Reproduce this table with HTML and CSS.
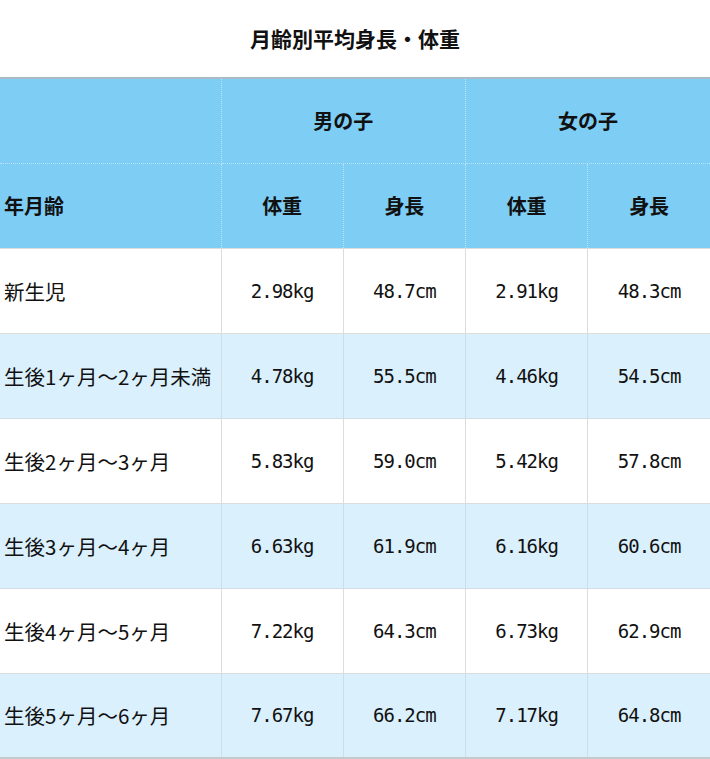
FILE: index.html
```html
<!DOCTYPE html>
<html lang="ja">
<head>
<meta charset="utf-8">
<link rel="stylesheet" href="styles.css">
</head>
<body>
<h1 class="title">月齢別平均身長・体重</h1>
<table class="growth">
  <colgroup>
    <col class="c-age"><col class="c-val"><col class="c-val"><col class="c-val"><col class="c-val">
  </colgroup>
  <thead>
    <tr>
      <th class="age"></th>
      <th colspan="2">男の子</th>
      <th colspan="2">女の子</th>
    </tr>
    <tr>
      <th class="age">年月齢</th>
      <th>体重</th><th>身長</th><th>体重</th><th>身長</th>
    </tr>
  </thead>
  <tbody>
    <tr><td class="age">新生児</td><td class="num">2.98kg</td><td class="num">48.7cm</td><td class="num">2.91kg</td><td class="num">48.3cm</td></tr>
    <tr class="alt"><td class="age">生後1ヶ月～2ヶ月未満</td><td class="num">4.78kg</td><td class="num">55.5cm</td><td class="num">4.46kg</td><td class="num">54.5cm</td></tr>
    <tr><td class="age">生後2ヶ月～3ヶ月</td><td class="num">5.83kg</td><td class="num">59.0cm</td><td class="num">5.42kg</td><td class="num">57.8cm</td></tr>
    <tr class="alt"><td class="age">生後3ヶ月～4ヶ月</td><td class="num">6.63kg</td><td class="num">61.9cm</td><td class="num">6.16kg</td><td class="num">60.6cm</td></tr>
    <tr><td class="age">生後4ヶ月～5ヶ月</td><td class="num">7.22kg</td><td class="num">64.3cm</td><td class="num">6.73kg</td><td class="num">62.9cm</td></tr>
    <tr class="alt"><td class="age">生後5ヶ月～6ヶ月</td><td class="num">7.67kg</td><td class="num">66.2cm</td><td class="num">7.17kg</td><td class="num">64.8cm</td></tr>
  </tbody>
</table>
</body>
</html>
```
FILE: styles.css
```css
html, body {
  margin: 0;
  padding: 0;
  background: #ffffff;
  color: #111111;
  font-family: "Noto Sans CJK JP", "Noto Sans", sans-serif;
}
.title {
  margin: 0;
  height: 77px;
  line-height: 76px;
  text-align: center;
  font-size: 21px;
  font-weight: 700;
  letter-spacing: 0;
}
.growth {
  width: 710px;
  border-collapse: collapse;
  table-layout: fixed;
  border-top: 2px solid #a9bcc6;
  border-bottom: 2px solid #c4c9cc;
}
.c-age { width: 221px; }
.growth th,
.growth td {
  height: 85px;
  padding: 0;
  box-sizing: border-box;
  vertical-align: middle;
}
.growth th {
  background: #7ecdf5;
  font-size: 20px;
  font-weight: 700;
  text-align: center;
  border: 1px dotted #b9e3f9;
}
.growth th.age {
  text-align: left;
  padding-left: 4px;
}
.growth thead tr:first-child th { border-top: none; }
.growth td {
  background: #ffffff;
  border: 1px solid #dcdcdc;
  font-size: 20px;
}
.growth tr.alt td { background: #daf0fd; border-color: #cfdde6; }
.growth td.age {
  text-align: left;
  padding-left: 4px;
  white-space: nowrap;
  font-size: 20.5px;
}
.growth td.num {
  text-align: center;
  font-family: "DejaVu Sans Mono", "Liberation Mono", monospace;
  font-size: 19px;
  letter-spacing: -1px;
}
.growth th:first-child, .growth td:first-child { border-left: none; }
.growth th:last-child, .growth td:last-child { border-right: none; }
```
